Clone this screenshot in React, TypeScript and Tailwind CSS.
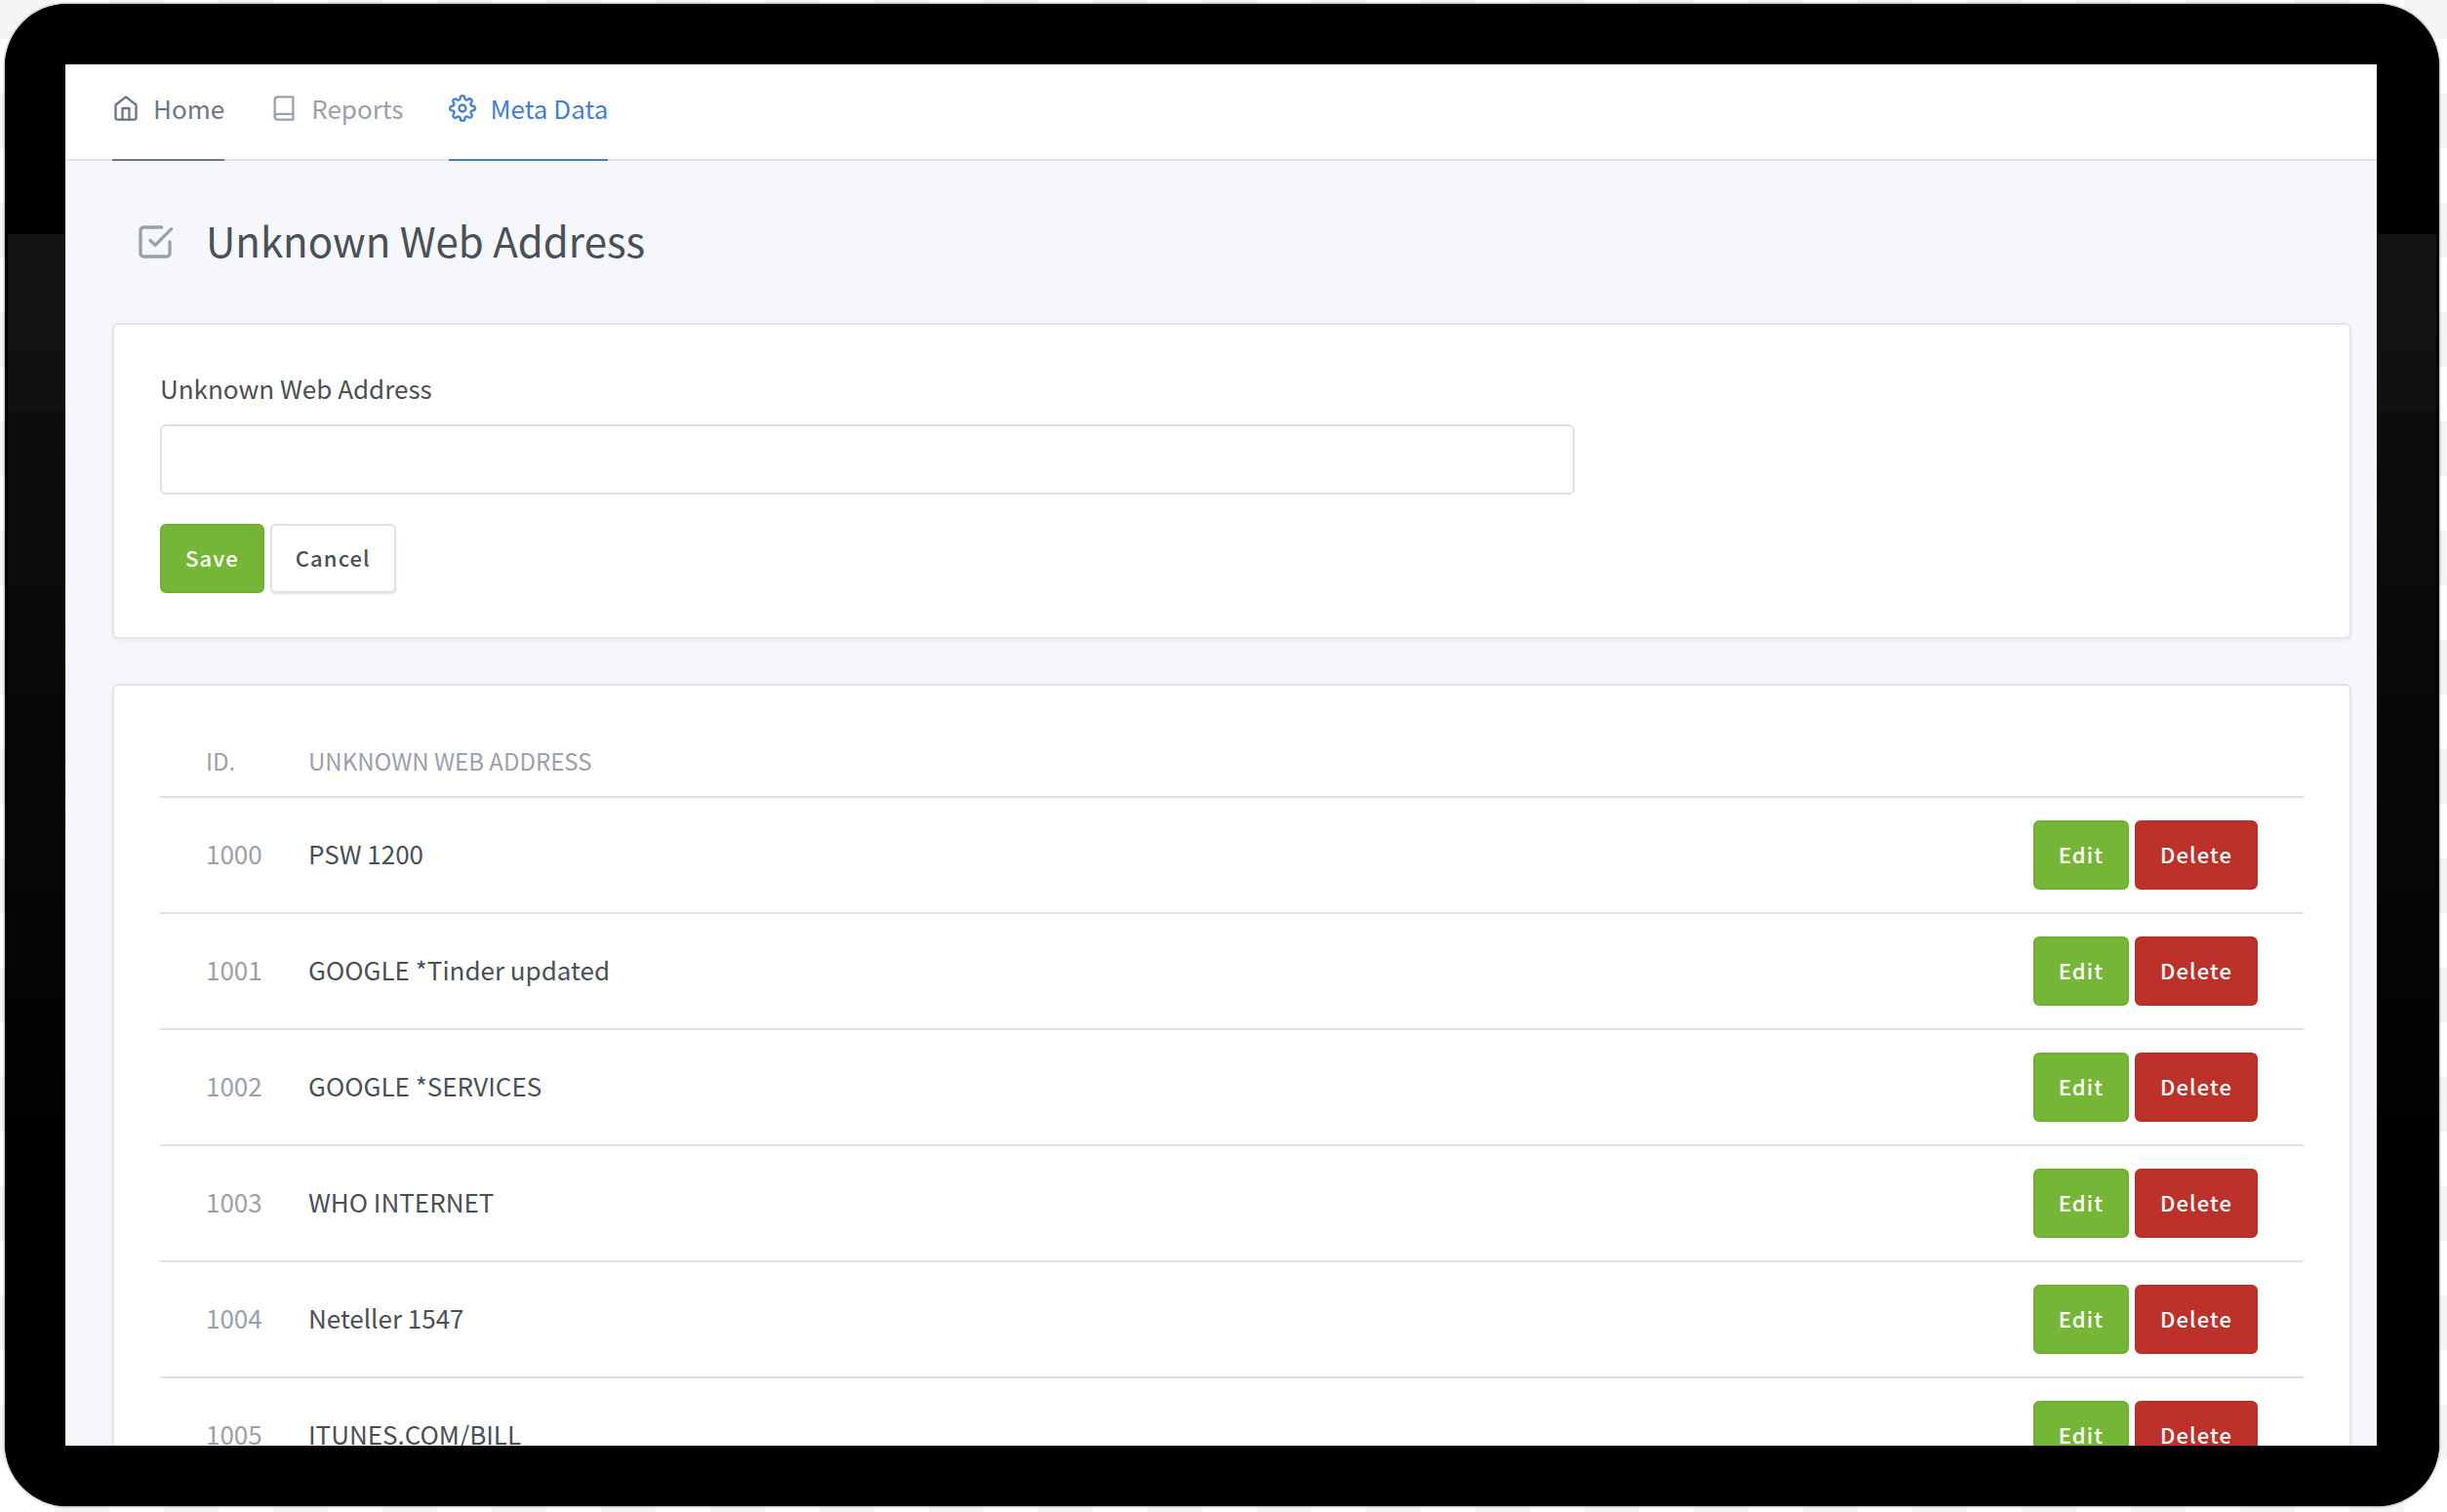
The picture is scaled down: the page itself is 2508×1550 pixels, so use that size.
import React from "react";
import { FiBook, FiCheckSquare, FiHome, FiSettings } from "react-icons/fi";

const rows = [
  { id: "1000", name: "PSW 1200" },
  { id: "1001", name: "GOOGLE *Tinder updated" },
  { id: "1002", name: "GOOGLE *SERVICES" },
  { id: "1003", name: "WHO INTERNET" },
  { id: "1004", name: "Neteller 1547" },
  { id: "1005", name: "ITUNES.COM/BILL" },
];

const button = "h-[71px] rounded-md border-2 px-6 pb-1 text-[22px] font-medium tracking-wider";
const green = "border-[#6fb02f] bg-[#76b637] text-white";
const red = "border-[#b93027] bg-[#bc322a] text-white";
const card = "rounded-md border-2 border-[#e0e5ec] bg-white shadow-[0_2px_4px_rgba(0,0,0,0.05)]";
const navLink = "flex items-start gap-3.5 border-b-2 pt-[25px]";
const navIcon = "mt-1.5 size-7";

function NavBar() {
  return (
    <header className="h-[99px] border-b-2 border-[#dde2ec] bg-white px-12">
      <nav className="flex h-[99px] gap-[47px]">
        <a href="#home" className={`${navLink} border-[#6e7687] text-[#6e7687]`}>
          <FiHome className={navIcon} aria-hidden="true" />
          Home
        </a>
        <a href="#reports" className={`${navLink} border-transparent text-[#9aa0ac]`}>
          <FiBook className={navIcon} aria-hidden="true" />
          Reports
        </a>
        <a href="#meta-data" className={`${navLink} border-[#467fcf] text-[#467fcf]`}>
          <FiSettings className={navIcon} aria-hidden="true" />
          Meta Data
        </a>
      </nav>
    </header>
  );
}

function AddressForm() {
  return (
    <form className={`${card} px-[47px] pt-[45px] pb-[45px]`} onSubmit={(e: React.FormEvent) => e.preventDefault()}>
      <label htmlFor="address" className="block">
        Unknown Web Address
      </label>
      <input
        id="address"
        type="text"
        className="mt-[17px] block h-[72px] w-[66%] rounded-md border-2 border-[#dde2ea] px-6 outline-none"
      />
      <div className="mt-[30px] flex gap-[6px]">
        <button type="submit" className={`${button} ${green}`}>
          Save
        </button>
        <button type="button" className={`${button} border-[#dde2ea] bg-white text-[#495057] shadow-sm`}>
          Cancel
        </button>
      </div>
    </form>
  );
}

function AddressTable() {
  return (
    <section className={`${card} mt-[46px] px-[47px] pt-11`}>
      <table className="w-full border-collapse">
        <thead>
          <tr className="h-[70px] border-b-2 border-[#dee2e6] text-left text-[24px] text-[#9aa0ac]">
            <th scope="col" className="w-[128px] pb-1 pl-[47px] font-normal">
              ID.
            </th>
            <th scope="col" className="pb-1 pl-6 font-normal">
              UNKNOWN WEB ADDRESS
            </th>
            <td />
          </tr>
        </thead>
        <tbody>
          {rows.map((row) => (
            <tr key={row.id} className="h-[119px] border-b-2 border-[#dee2e6]">
              <td className="pb-1 pl-[47px] text-[#9aa0ac]">{row.id}</td>
              <td className="pb-1 pl-6">{row.name}</td>
              <td className="pr-[47px]">
                <div className="flex justify-end gap-[6px]">
                  <button type="button" className={`${button} ${green}`}>
                    Edit
                  </button>
                  <button type="button" className={`${button} ${red}`}>
                    Delete
                  </button>
                </div>
              </td>
            </tr>
          ))}
        </tbody>
      </table>
    </section>
  );
}

export default function App() {
  return (
    <div className="h-screen overflow-hidden bg-[conic-gradient(#fff_25%,#f5f5f5_0_50%,#fff_0_75%,#f5f5f5_0)] bg-[length:112px_112px] bg-[position:0_96px] pt-1 pr-2 pb-[6px] pl-[5px] font-['Noto_Sans_CJK_SC','Noto_Sans',sans-serif] text-[26px] leading-[40px] text-[#495057]">
      <div className="h-full rounded-[64px] bg-[linear-gradient(#000_236px,#131313_236px,#111_418px,#0d0d0d_418px,#000_1230px)] pt-[62px] pr-[64px] pb-[62px] pl-[62px] shadow-[0_0_3px_rgba(0,0,0,0.6),inset_0_0_0_3px_#000]">
        <div className="h-full overflow-hidden bg-[#f5f7fb]">
          <NavBar />
          <main className="pr-[26px] pl-12">
            <div className="flex h-[166px] items-center gap-8 pl-6">
              <FiCheckSquare className="size-10 text-[#9aa0ac]" aria-hidden="true" />
              <h1 className="pb-1 text-[42px] leading-[56px]">Unknown Web Address</h1>
            </div>
            <AddressForm />
            <AddressTable />
          </main>
        </div>
      </div>
    </div>
  );
}
